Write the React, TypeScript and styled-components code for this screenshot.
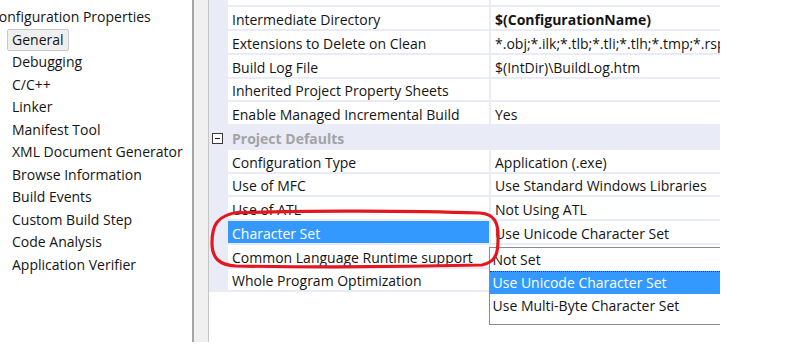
import React from "react";
import styled, { createGlobalStyle } from "styled-components";

const Global = createGlobalStyle`
  html, body { margin: 0; padding: 0; background: #ffffff; }
  body { font-family: "Open Sans", "Noto Sans", "DejaVu Sans", sans-serif; }
`;

const Page = styled.div`
  position: relative;
  width: 806px;
  height: 346px;
  overflow: hidden;
  display: flex;
  align-items: flex-start;
  background: #ffffff;
  font-size: 14px;
  color: #141414;
`;

const Sidebar = styled.div`
  width: 192px;
  flex: none;
  padding-top: 6px;
  display: flex;
  flex-direction: column;
`;

const TreeItem = styled.div<{ $level: number }>`
  height: 22.5px;
  display: flex;
  align-items: center;
  padding-left: ${(p) => (p.$level === 0 ? 0 : 7)}px;
  margin-left: ${(p) => (p.$level === 0 ? -15 : 0)}px;
  white-space: nowrap;
`;

const TreeLabel = styled.span<{ $selected?: boolean }>`
  padding: 0 4px;
  line-height: 20px;
  border: 1px solid ${(p) => (p.$selected ? "#c9c9c9" : "transparent")};
  border-radius: 2px;
  background: ${(p) => (p.$selected ? "#efefef" : "transparent")};
`;

const Splitter = styled.div`
  width: 14px;
  flex: none;
  height: 342px;
  background: #f0f0f0;
  border-left: 2px solid #a5a5a5;
  border-right: 1px solid #c4c4c4;
`;

const GridClip = styled.div`
  position: relative;
  width: 511px;
  height: 346px;
  flex: none;
  overflow: hidden;
`;

const Grid = styled.div`
  display: flex;
  flex-direction: column;
  background: #e9ebf7;
  width: 511px;
`;

const Row = styled.div`
  height: 23.75px;
  box-sizing: border-box;
  display: grid;
  grid-template-columns: 17px 261px 229px;
  column-gap: 2px;
  padding-bottom: 2px;
`;

const TopRow = styled(Row)`
  height: 7.25px;
`;

const Margin = styled.div`
  background: #e9ebf7;
`;

const Cell = styled.div<{ $selected?: boolean; $bold?: boolean }>`
  background: ${(p) => (p.$selected ? "#3399ff" : "#ffffff")};
  color: ${(p) => (p.$selected ? "#ffffff" : "#141414")};
  font-weight: ${(p) => (p.$bold ? 700 : 400)};
  display: flex;
  align-items: center;
  padding-left: 4px;
  padding-top: 3px;
  box-sizing: border-box;
  white-space: nowrap;
  overflow: hidden;
`;

const CategoryRow = styled.div`
  height: 23.75px;
  display: flex;
  align-items: center;
  background: #e9ebf7;
  box-sizing: border-box;
  padding-top: 1px;
`;

const Toggle = styled.div`
  width: 11px;
  height: 11px;
  box-sizing: border-box;
  border: 1px solid #3a3a3a;
  background: #ffffff;
  margin-left: 3px;
  margin-right: 9px;
  display: flex;
  align-items: center;
  justify-content: center;
  &::after {
    content: "";
    width: 5px;
    height: 1px;
    background: #222222;
  }
`;

const CategoryLabel = styled.span`
  color: #a3a3a3;
  font-weight: 700;
`;

const Dropdown = styled.div`
  position: absolute;
  left: 279.5px;
  top: 247px;
  width: 250px;
  height: 78px;
  box-sizing: border-box;
  border: 1px solid #8b8b8b;
  background: #ffffff;
  display: flex;
  flex-direction: column;
`;

const Option = styled.div<{ $selected?: boolean }>`
  height: 23px;
  flex: none;
  display: flex;
  align-items: center;
  padding-left: 3px;
  padding-bottom: 2px;
  box-sizing: border-box;
  background: ${(p) => (p.$selected ? "#3399ff" : "#ffffff")};
  color: ${(p) => (p.$selected ? "#ffffff" : "#141414")};
  border-top: 1px ${(p) => (p.$selected ? "dotted #1b3d66" : "solid transparent")};
  white-space: nowrap;
`;

const Annotation = styled.svg`
  position: absolute;
  left: 0;
  top: 0;
  pointer-events: none;
`;

type Prop = { name: string; value: string; bold?: boolean; selected?: boolean };

const general: Prop[] = [
  { name: "Intermediate Directory", value: "$(ConfigurationName)", bold: true },
  { name: "Extensions to Delete on Clean", value: "*.obj;*.ilk;*.tlb;*.tli;*.tlh;*.tmp;*.rsp;*.pgc;*.pgd" },
  { name: "Build Log File", value: "$(IntDir)\\BuildLog.htm" },
  { name: "Inherited Project Property Sheets", value: "" },
  { name: "Enable Managed Incremental Build", value: "Yes" },
];

const defaults: Prop[] = [
  { name: "Configuration Type", value: "Application (.exe)" },
  { name: "Use of MFC", value: "Use Standard Windows Libraries" },
  { name: "Use of ATL", value: "Not Using ATL" },
  { name: "Character Set", value: "Use Unicode Character Set", selected: true },
  { name: "Common Language Runtime support", value: "" },
  { name: "Whole Program Optimization", value: "" },
];

const tree = [
  "General",
  "Debugging",
  "C/C++",
  "Linker",
  "Manifest Tool",
  "XML Document Generator",
  "Browse Information",
  "Build Events",
  "Custom Build Step",
  "Code Analysis",
  "Application Verifier",
];

const PropRow = ({ p }: { p: Prop }) => (
  <Row>
    <Margin />
    <Cell $selected={p.selected}>{p.name}</Cell>
    <Cell $bold={p.bold}>{p.value}</Cell>
  </Row>
);

export default function App() {
  return (
    <>
      <Global />
      <Page>
        <Sidebar>
          <TreeItem $level={0}>
            <TreeLabel>Configuration Properties</TreeLabel>
          </TreeItem>
          {tree.map((t, i) => (
            <TreeItem key={t} $level={1}>
              <TreeLabel $selected={i === 0}>{t}</TreeLabel>
            </TreeItem>
          ))}
        </Sidebar>
        <Splitter />
        <GridClip>
          <Grid>
            <TopRow>
              <Margin />
              <Cell />
              <Cell />
            </TopRow>
            {general.map((p) => (
              <PropRow key={p.name} p={p} />
            ))}
            <CategoryRow>
              <Toggle />
              <CategoryLabel>Project Defaults</CategoryLabel>
            </CategoryRow>
            {defaults.map((p) => (
              <PropRow key={p.name} p={p} />
            ))}
          </Grid>
          <Dropdown>
            <Option>Not Set</Option>
            <Option $selected>Use Unicode Character Set</Option>
            <Option>Use Multi-Byte Character Set</Option>
          </Dropdown>
        </GridClip>
        <Annotation width="806" height="346" viewBox="0 0 806 346">
          <path
            d="M 236 213 C 300 210, 420 211, 480 213 C 494 214, 499 222, 498 240 C 498 255, 495 262, 482 265 C 400 267, 300 267, 236 266 C 219 265, 212 258, 212 243 C 212 226, 216 215, 240 212"
            fill="none"
            stroke="#e3171f"
            strokeWidth="3.2"
            strokeLinecap="round"
          />
        </Annotation>
      </Page>
    </>
  );
}
